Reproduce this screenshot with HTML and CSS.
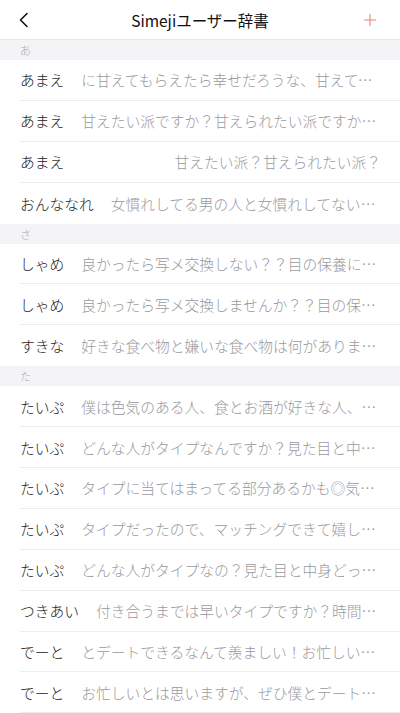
FILE: index.html
```html
<!DOCTYPE html>
<html lang="ja">
<head>
<meta charset="utf-8">
<link rel="stylesheet" href="styles.css">
</head>
<body>
<header class="nav">
  <button class="nav-btn back" aria-label="戻る">
    <svg width="14" height="16" viewBox="0 0 14 16"><path d="M10 1.5 L3.5 8 L10 14.5" fill="none" stroke="#111" stroke-width="1.6" stroke-linecap="round" stroke-linejoin="round"/></svg>
  </button>
  <h1 class="title">Simejiユーザー辞書</h1>
  <button class="nav-btn add" aria-label="追加">
    <svg width="14" height="14" viewBox="0 0 14 14"><path d="M7 1 V13 M1 7 H13" fill="none" stroke="#e8847a" stroke-width="1.1"/></svg>
  </button>
</header>
<main class="list">
  <div class="section">あ</div>
  <div class="row"><span class="key">あまえ</span><span class="val">に甘えてもらえたら幸せだろうな、甘えてもらえたら嬉しいな</span></div>
  <div class="row"><span class="key">あまえ</span><span class="val">甘えたい派ですか？甘えられたい派ですか？教えてください</span></div>
  <div class="row"><span class="key">あまえ</span><span class="val">甘えたい派？甘えられたい派？</span></div>
  <div class="row"><span class="key">おんななれ</span><span class="val">女慣れしてる男の人と女慣れしてない男の人、どっちがいい？</span></div>
  <div class="section">さ</div>
  <div class="row"><span class="key">しゃめ</span><span class="val">良かったら写メ交換しない？？目の保養にしたい</span></div>
  <div class="row"><span class="key">しゃめ</span><span class="val">良かったら写メ交換しませんか？？目の保養にしたいです</span></div>
  <div class="row"><span class="key">すきな</span><span class="val">好きな食べ物と嫌いな食べ物は何がありますか？</span></div>
  <div class="section">た</div>
  <div class="row"><span class="key">たいぷ</span><span class="val">僕は色気のある人、食とお酒が好きな人、笑顔が素敵な人がタイプです</span></div>
  <div class="row"><span class="key">たいぷ</span><span class="val">どんな人がタイプなんですか？見た目と中身どっちも教えてください</span></div>
  <div class="row"><span class="key">たいぷ</span><span class="val">タイプに当てはまってる部分あるかも◎気になります</span></div>
  <div class="row"><span class="key">たいぷ</span><span class="val">タイプだったので、マッチングできて嬉しいです！</span></div>
  <div class="row"><span class="key">たいぷ</span><span class="val">どんな人がタイプなの？見た目と中身どっちも教えて</span></div>
  <div class="row"><span class="key">つきあい</span><span class="val">付き合うまでは早いタイプですか？時間をかけるタイプですか？</span></div>
  <div class="row"><span class="key">でーと</span><span class="val">とデートできるなんて羨ましい！お忙しいとは思いますが</span></div>
  <div class="row"><span class="key">でーと</span><span class="val">お忙しいとは思いますが、ぜひ僕とデートしてください</span></div>
</main>
</body>
</html>
```

FILE: styles.css
```css
* { box-sizing: border-box; }
html, body {
  margin: 0;
  padding: 0;
  background: #fff;
  font-family: "Noto Sans CJK JP", "Noto Sans", sans-serif;
  overflow: hidden;
}
.nav {
  height: 40px;
  display: grid;
  grid-template-columns: 60px 1fr 60px;
  align-items: center;
  border-bottom: 1px solid #e6e6e8;
}
.nav-btn {
  background: none;
  border: 0;
  padding: 0;
  display: flex;
  align-items: center;
  height: 40px;
}
.back { justify-content: flex-start; padding-left: 17px; }
.add { justify-content: flex-end; padding-right: 23px; }
.title {
  margin: 0;
  text-align: center;
  font-size: 15.5px;
  font-weight: 400;
  color: #111;
  letter-spacing: 0;
}
.section {
  height: 20px;
  background: #f4f4f6;
  color: #a8a8ac;
  font-size: 11px;
  font-weight: 300;
  line-height: 20px;
  padding-left: 20px;
}
.row {
  height: 40.9px;
  margin-left: 20px;
  padding-right: 19px;
  display: flex;
  align-items: center;
  gap: 17px;
  border-bottom: 1px solid #ececee;
  font-size: 14.75px;
  font-weight: 300;
}
.row:has(+ .section) { border-bottom: 0; }
.key {
  flex: none;
  color: #222;
}
.val {
  flex: 1;
  min-width: 0;
  color: #9a9a9e;
  text-align: right;
  white-space: nowrap;
  overflow: hidden;
  text-overflow: ellipsis;
}
```
